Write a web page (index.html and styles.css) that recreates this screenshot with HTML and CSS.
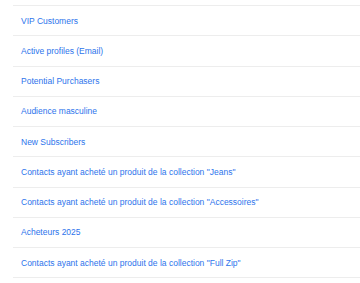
FILE: index.html
```html
<!DOCTYPE html>
<html lang="en">
<head>
    <meta charset="UTF-8">
    <meta name="viewport" content="width=device-width, initial-scale=1.0">
    <title>Segments</title>
    <link rel="stylesheet" href="styles.css">
</head>
<body>
    <ul class="segment-list">
        <li class="segment-item"><a href="#">VIP Customers</a></li>
        <li class="segment-item"><a href="#">Active profiles (Email)</a></li>
        <li class="segment-item"><a href="#">Potential Purchasers</a></li>
        <li class="segment-item"><a href="#">Audience masculine</a></li>
        <li class="segment-item"><a href="#">New Subscribers</a></li>
        <li class="segment-item"><a href="#">Contacts ayant acheté un produit de la collection "Jeans"</a></li>
        <li class="segment-item"><a href="#">Contacts ayant acheté un produit de la collection "Accessoires"</a></li>
        <li class="segment-item"><a href="#">Acheteurs 2025</a></li>
        <li class="segment-item"><a href="#">Contacts ayant acheté un produit de la collection "Full Zip"</a></li>
    </ul>
</body>
</html>
```

FILE: styles.css
```css
body {
    margin: 0;
    background: #fff;
    font-family: 'Liberation Sans', Arial, sans-serif;
}
.segment-list {
    list-style: none;
    margin: 0;
    padding: 5px 0 0 13px;
}
.segment-item {
    border-top: 1px solid #ededed;
    height: 29.25px;
    display: flex;
    align-items: center;
    padding-left: 8px;
}
.segment-item:last-child {
    border-bottom: 1px solid #ededed;
}
.segment-item a {
    color: #2c74ec;
    text-decoration: none;
    font-size: 8.5px;
}
```
